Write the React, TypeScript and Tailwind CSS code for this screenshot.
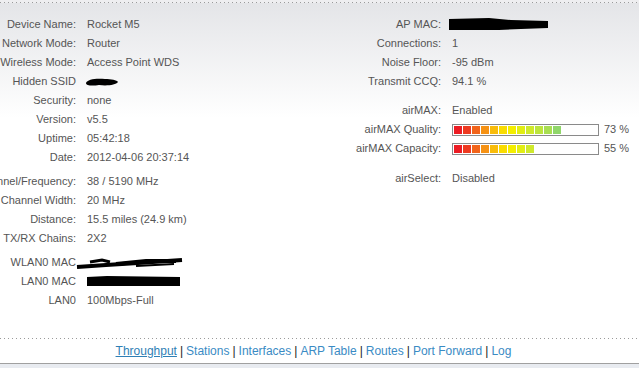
import React from "react";

// status page of the radio, main tab
const segColors = [
  "#ec1c24", "#ee3a20", "#f2641a", "#f69214", "#f9bc0a", "#fadc00",
  "#f4ee00", "#e2ee14", "#cfe92c", "#bce43e", "#a8de52", "#90d66a",
  "#74cc8a", "#62c4a0", "#56bcb4", "#4cb4c4",
];

function Bar({ pct }: { pct: number }) {
  const lit = Math.round((pct / 100) * segColors.length);
  return (
    <div className="flex items-center">
      <div className="w-[147px] h-[12px] border border-[#8a8a8a] bg-white p-px flex gap-px">
        {segColors.map((c, i) => (
          <div
            key={i}
            className="w-[8px] h-[8px] shrink-0"
            style={{ background: i < lit ? c : "transparent" }}
          />
        ))}
      </div>
      <span className="ml-[5px]">{pct} %</span>
    </div>
  );
}

function Row({
  label,
  width,
  children,
}: {
  label: string;
  width: string;
  children?: React.ReactNode;
}) {
  return (
    <div className="flex items-center h-[19px]">
      <div className={`${width} shrink-0 flex justify-end`}>
        <span className="whitespace-nowrap shrink-0">{label}</span>
      </div>
      <div className="ml-[11px] whitespace-nowrap flex items-center">{children}</div>
    </div>
  );
}

const Dots = () => (
  <div className="h-px w-full bg-[linear-gradient(to_right,#9a9a9a_1px,transparent_1px)] bg-[length:4px_1px]" />
);

export default function App() {
  const L = "w-[76px]";
  const R = "w-[121px]";
  return (
    <div className="w-[639px] h-[368px] overflow-hidden flex flex-col bg-white font-['Liberation_Sans',Arial,sans-serif] text-[11px] text-[#555]">
      <div className="pt-[2px] bg-[#eeeef0]">
        <Dots />
      </div>
      <div className="flex-1 flex bg-[linear-gradient(#e4e5e8,#ffffff_115px)] pt-[12px]">
        <div className="w-[320px] shrink-0 flex flex-col">
          <Row width={L} label="Device Name:">Rocket M5</Row>
          <Row width={L} label="Network Mode:">Router</Row>
          <Row width={L} label="Wireless Mode:">Access Point WDS</Row>
          <Row width={L} label="Hidden SSID">
            <svg width="34" height="10" className="-ml-[2px]">
              <path d="M1 6 C2 2 12 1 20 2 C26 2 32 3 33 5 C31 8 22 9 14 8 C8 9 1 9 1 6Z" fill="#000" />
            </svg>
          </Row>
          <Row width={L} label="Security:">none</Row>
          <Row width={L} label="Version:">v5.5</Row>
          <Row width={L} label="Uptime:">05:42:18</Row>
          <Row width={L} label="Date:">2012-04-06 20:37:14</Row>
          <div className="h-[5px]" />
          <Row width={L} label="Channel/Frequency:">38 / 5190 MHz</Row>
          <Row width={L} label="Channel Width:">20 MHz</Row>
          <Row width={L} label="Distance:">15.5 miles (24.9 km)</Row>
          <Row width={L} label="TX/RX Chains:">2X2</Row>
          <div className="h-[5px]" />
          <Row width={L} label="WLAN0 MAC">
            <svg width="108" height="14" className="-ml-[11px]">
              <path d="M1 11 L30 9 L62 7 L106 4" stroke="#000" strokeWidth="4" fill="none" />
              <path d="M14 6 L26 4 L34 6" stroke="#000" strokeWidth="3" fill="none" />
              <path d="M40 8 L70 5 L100 5" stroke="#000" strokeWidth="4" fill="none" />
              <path d="M60 10 L98 8" stroke="#000" strokeWidth="2" fill="none" />
            </svg>
          </Row>
          <Row width={L} label="LAN0 MAC">
            <svg width="94" height="11">
              <path d="M0 1 L20 0 L93 1 L93 10 L0 10 Z" fill="#000" />
            </svg>
          </Row>
          <Row width={L} label="LAN0">100Mbps-Full</Row>
        </div>
        <div className="flex-1 flex flex-col">
          <Row width={R} label="AP MAC:">
            <svg width="100" height="13" className="-ml-[3px]">
              <path d="M0 1 L40 0 L62 2 L99 3 L99 10 L72 11 L50 12 L0 12 Z" fill="#000" />
            </svg>
          </Row>
          <Row width={R} label="Connections:">1</Row>
          <Row width={R} label="Noise Floor:">-95 dBm</Row>
          <Row width={R} label="Transmit CCQ:">94.1 %</Row>
          <div className="h-[10px]" />
          <Row width={R} label="airMAX:">Enabled</Row>
          <Row width={R} label="airMAX Quality:">
            <Bar pct={73} />
          </Row>
          <Row width={R} label="airMAX Capacity:">
            <Bar pct={55} />
          </Row>
          <div className="h-[11px]" />
          <Row width={R} label="airSelect:">Disabled</Row>
        </div>
      </div>
      <Dots />
      <div className="h-[24px] bg-white flex items-center justify-center pr-[12px] text-[12px] text-[#222]">
        <span className="text-[#2f7fb5] underline">Throughput</span>
        <span className="mx-[3px]">|</span>
        <span className="text-[#3a8bc4]">Stations</span>
        <span className="mx-[3px]">|</span>
        <span className="text-[#3a8bc4]">Interfaces</span>
        <span className="mx-[3px]">|</span>
        <span className="text-[#3a8bc4]">ARP Table</span>
        <span className="mx-[3px]">|</span>
        <span className="text-[#3a8bc4]">Routes</span>
        <span className="mx-[3px]">|</span>
        <span className="text-[#3a8bc4]">Port Forward</span>
        <span className="mx-[3px]">|</span>
        <span className="text-[#3a8bc4]">Log</span>
      </div>
      <div className="h-px bg-[#a0a0a0]" />
      <div className="h-[4px] bg-[#e8ebf0]" />
    </div>
  );
}
